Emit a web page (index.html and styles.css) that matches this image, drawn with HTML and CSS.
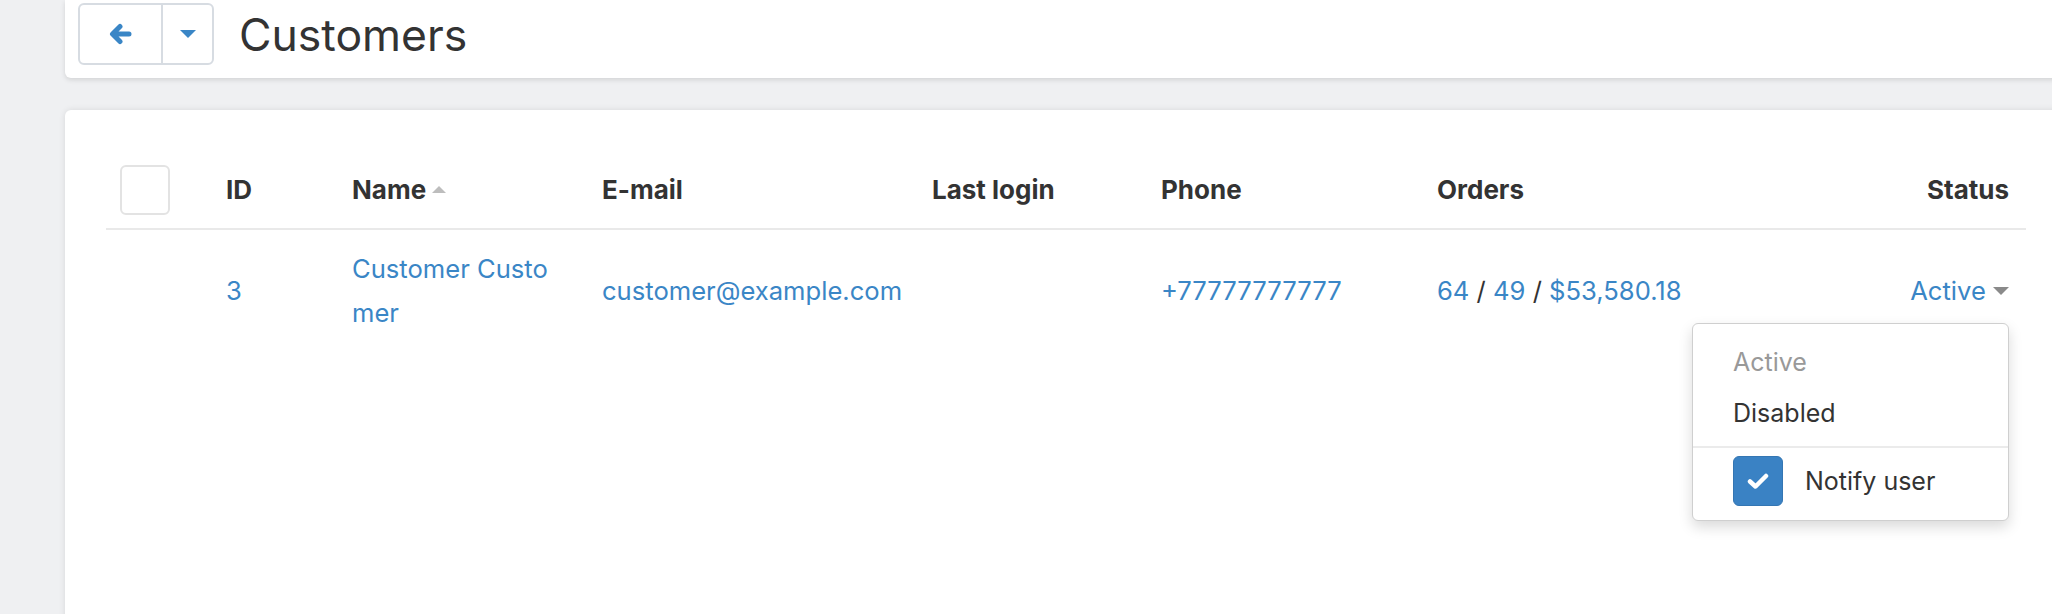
FILE: index.html
```html
<!DOCTYPE html>
<html lang="en">
<head>
  <meta charset="UTF-8">
  <title>Customers</title>
  <link rel="stylesheet" href="styles.css">
</head>
<body>
  <div class="page">
    <div class="topbar">
      <div class="btn-group">
        <a class="btn btn-back" href="#">
          <svg width="24" height="24" viewBox="0 0 24 24"><path d="M11 4.5 3.5 12 11 19.5M4 12h16" fill="none" stroke="#3a86c6" stroke-width="5" stroke-linecap="round" stroke-linejoin="round"/></svg>
        </a>
        <a class="btn btn-caret" href="#"><span class="caret"></span></a>
      </div>
      <h1 class="title">Customers</h1>
    </div>

    <div class="card">
      <table class="grid">
        <thead>
          <tr>
            <th class="col-check"><span class="checkbox"></span></th>
            <th class="col-id">ID</th>
            <th class="col-name">Name <span class="sort-up"></span></th>
            <th class="col-email">E-mail</th>
            <th class="col-login">Last login</th>
            <th class="col-phone">Phone</th>
            <th class="col-orders">Orders</th>
            <th class="col-status">Status</th>
          </tr>
        </thead>
        <tbody>
          <tr>
            <td></td>
            <td><a href="#">3</a></td>
            <td><a class="name-link" href="#">Customer Customer</a></td>
            <td><a href="#">customer@example.com</a></td>
            <td></td>
            <td><a href="#">+77777777777</a></td>
            <td><a href="#">64</a> / <a href="#">49</a> / <a href="#">$53,580.18</a></td>
            <td class="status-cell">
              <a class="status-toggle" href="#">Active <span class="caret caret-grey"></span></a>
              <div class="dropdown">
                <div class="dropdown-item disabled">Active</div>
                <div class="dropdown-item">Disabled</div>
                <div class="dropdown-divider"></div>
                <label class="notify">
                  <span class="checkbox checked">
                    <svg width="22" height="16" viewBox="0 0 22 16"><path d="M3 8.5 8.5 13.5 19 3" fill="none" stroke="#fff" stroke-width="4.5" stroke-linecap="round" stroke-linejoin="round"/></svg>
                  </span>
                  Notify user
                </label>
              </div>
            </td>
          </tr>
        </tbody>
      </table>
    </div>
  </div>
</body>
</html>
```

FILE: styles.css
```css
body {
  margin: 0;
  background: #eff0f2;
  font-family: Inter, "Noto Sans", sans-serif;
  color: #333;
  overflow: hidden;
  height: 614px;
}

a {
  color: #3a86c6;
  text-decoration: none;
}

.page {
  padding-left: 65px;
  margin-right: -12px;
}

.topbar {
  display: flex;
  align-items: center;
  height: 78px;
  padding: 0 0 0 13px;
  background: #fff;
  border-radius: 0 0 6px 6px;
  box-shadow: 0 2px 5px rgba(0, 0, 0, 0.12);
  box-sizing: border-box;
}

.btn-group {
  display: flex;
  height: 62px;
  margin-top: -10px;
  border: 2px solid #d7dce2;
  border-radius: 6px;
  box-sizing: border-box;
}

.btn {
  display: flex;
  align-items: center;
  justify-content: center;
}

.btn-back {
  width: 81px;
  border-right: 2px solid #d7dce2;
}

.btn-caret {
  width: 49px;
}

.caret {
  display: inline-block;
  width: 0;
  height: 0;
  border-left: 8px solid transparent;
  border-right: 8px solid transparent;
  border-top: 8px solid #3a86c6;
}

.caret-grey {
  border-top-color: #8a8a8a;
  vertical-align: middle;
  margin-top: -4px;
}

.title {
  margin: -8px 0 0 25px;
  font-size: 44.5px;
  font-weight: 400;
  color: #333;
}

.card {
  margin-top: 32px;
  height: 520px;
  padding: 40px 38px 0 41px;
  background: #fff;
  border-radius: 6px;
  box-shadow: 0 0 6px rgba(0, 0, 0, 0.1);
}

.grid {
  width: 1920px;
  border-collapse: collapse;
  font-size: 25.6px;
  table-layout: fixed;
}

.grid th {
  text-align: left;
  font-weight: 700;
  font-size: 26px;
  line-height: 38px;
  padding: 15px 14px 13px;
  border-bottom: 2px solid #e9e9e9;
  vertical-align: middle;
}

.grid td {
  line-height: 44px;
  padding: 17px 14px;
  vertical-align: middle;
}

.col-check { width: 78px; }
.col-id { width: 98px; }
.col-name { width: 222px; }
.col-email { width: 302px; }
.col-login { width: 201px; }
.col-phone { width: 248px; }
.col-orders { width: 349px; }
.col-status { width: 195px; }

.grid th.col-status,
.grid td.status-cell {
  text-align: right;
  padding-right: 17px;
}

.checkbox {
  display: inline-block;
  width: 50px;
  height: 50px;
  border: 2px solid #e3e3e3;
  border-radius: 6px;
  box-sizing: border-box;
  vertical-align: middle;
  background: #fff;
}

.sort-up {
  display: inline-block;
  width: 0;
  height: 0;
  border-left: 7px solid transparent;
  border-right: 7px solid transparent;
  border-bottom: 7px solid #bdbdbd;
  vertical-align: middle;
  margin: -4px 0 0 0;
}

.name-link {
  display: block;
  width: 208px;
  word-break: break-all;
}

.status-cell {
  position: relative;
}

.dropdown {
  position: absolute;
  top: 93px;
  right: 17px;
  width: 317px;
  padding: 13px 0 14px;
  background: #fff;
  border: 1px solid #cfcfcf;
  border-radius: 6px;
  box-shadow: 0 6px 14px rgba(0, 0, 0, 0.15);
  box-sizing: border-box;
  text-align: left;
  font-size: 25px;
  z-index: 2;
}

.dropdown-item {
  line-height: 51px;
  padding: 0 40px;
  color: #333;
}

.dropdown-item.disabled {
  color: #999;
}

.dropdown-divider {
  height: 2px;
  margin: 7px 0 8px;
  background: #ebebeb;
}

.notify {
  display: flex;
  align-items: center;
  gap: 22px;
  padding: 0 40px;
  line-height: 50px;
}

.checkbox.checked {
  display: flex;
  align-items: center;
  justify-content: center;
  width: 50px;
  height: 50px;
  background: #3a82c4;
  border: 1px solid #3476b3;
}
```
